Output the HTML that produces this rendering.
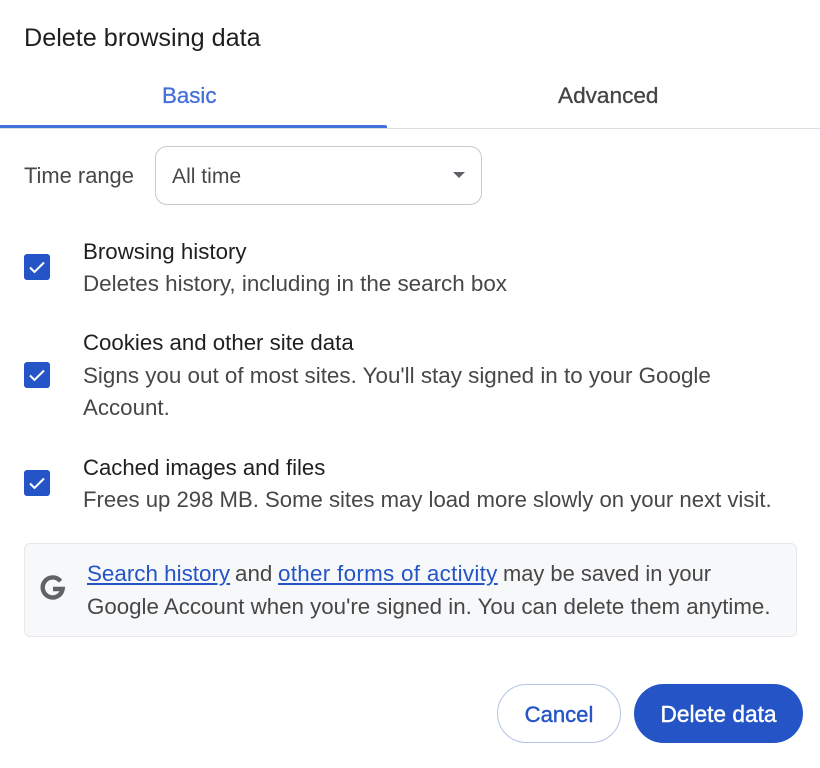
<!DOCTYPE html>
<html><head><meta charset="utf-8">
<style>
html,body{margin:0;padding:0;background:#fff}
body{width:820px;height:768px;position:relative;overflow:hidden;font-family:"Liberation Sans",sans-serif;color:#474747;font-size:22.3px;-webkit-font-smoothing:antialiased}
#w{position:absolute;left:0;top:0;width:820px;height:768px;filter:blur(.35px)}
.t{position:absolute;white-space:nowrap;line-height:30px}
.d{color:#1f1f1f}
.cb{position:absolute;left:24px;width:26px;height:26px;border-radius:3px;background:#2554c7}
.cb svg{position:absolute;left:0;top:0}
a{color:#2554c7;text-decoration:underline}
</style></head><body><div id="w">
<div class="t d" style="left:24px;top:23px;font-size:25.2px">Delete browsing data</div>
<div class="t" style="left:162px;top:81px;font-size:22.3px;color:#4470dc;-webkit-text-stroke:.3px #4470dc">Basic</div>
<div class="t" style="left:558px;top:81px;font-size:22.6px;color:#444;-webkit-text-stroke:.3px #444">Advanced</div>
<div style="position:absolute;left:0;top:128px;width:820px;height:1px;background:#dcdfe6"></div>
<div style="position:absolute;left:0;top:125px;width:387px;height:3px;background:#4470dc;border-radius:0 2px 0 0"></div>
<div class="t" style="left:24px;top:161px;font-size:21.9px">Time range</div>
<div style="position:absolute;left:155px;top:146px;width:325px;height:57px;border:1px solid #c8c9cc;border-radius:12px"></div>
<div class="t" style="left:172px;top:162px;font-size:21.1px">All time</div>
<div style="position:absolute;left:453px;top:172px;width:0;height:0;border-left:6px solid transparent;border-right:6px solid transparent;border-top:6px solid #5f6368"></div>

<div class="cb" style="top:254px"><svg width="26" height="26"><path d="M6 13.5l4.5 4.5L20 8.5" fill="none" stroke="#fff" stroke-width="2"/></svg></div>
<div class="t d" style="left:83px;top:237px">Browsing history</div>
<div class="t" style="left:83px;top:269px;font-size:22.4px">Deletes history, including in the search box</div>

<div class="cb" style="top:362px"><svg width="26" height="26"><path d="M6 13.5l4.5 4.5L20 8.5" fill="none" stroke="#fff" stroke-width="2"/></svg></div>
<div class="t d" style="left:83px;top:328px;font-size:22.24px">Cookies and other site data</div>
<div class="t" style="left:83px;top:361px;font-size:22.4px">Signs you out of most sites. You'll stay signed in to your Google</div>
<div class="t" style="left:83px;top:393px">Account.</div>

<div class="cb" style="top:470px"><svg width="26" height="26"><path d="M6 13.5l4.5 4.5L20 8.5" fill="none" stroke="#fff" stroke-width="2"/></svg></div>
<div class="t d" style="left:83px;top:453px;font-size:22.14px">Cached images and files</div>
<div class="t" style="left:83px;top:485px;font-size:22.14px">Frees up 298 MB. Some sites may load more slowly on your next visit.</div>

<div style="position:absolute;left:24px;top:543px;width:771px;height:92px;background:#f7f8fa;border:1px solid #e6e7ea;border-radius:6px"></div>
<svg style="position:absolute;left:39px;top:574px" width="27" height="27" viewBox="0 0 27 27"><path d="M21.5 7.2A10 10 0 1 0 23.6 15H14" fill="none" stroke="#5f6368" stroke-width="4.4"/></svg>
<div class="t" style="left:87px;top:559px;font-size:22.4px"><a>Search history</a></div>
<div class="t" style="left:235px;top:559px;font-size:22.4px">and</div>
<div class="t" style="left:278px;top:559px;font-size:22.4px;letter-spacing:.3px"><a>other forms of activity</a></div>
<div class="t" style="left:503px;top:559px;font-size:21.9px">may be saved in your</div>
<div class="t" style="left:87px;top:592px">Google Account when you're signed in. You can delete them anytime.</div>

<div style="position:absolute;left:497px;top:684px;width:122px;height:57px;border:1px solid #b4c3e6;border-radius:30px;text-align:center;line-height:59px;font-size:22.1px;color:#2554c7;-webkit-text-stroke:.4px #2554c7">Cancel</div>
<div style="position:absolute;left:634px;top:684px;width:169px;height:59px;background:#2554c7;border-radius:30px;text-align:center;line-height:61px;font-size:22.7px;color:#fff;-webkit-text-stroke:.4px #fff">Delete data</div>
</div></body></html>
